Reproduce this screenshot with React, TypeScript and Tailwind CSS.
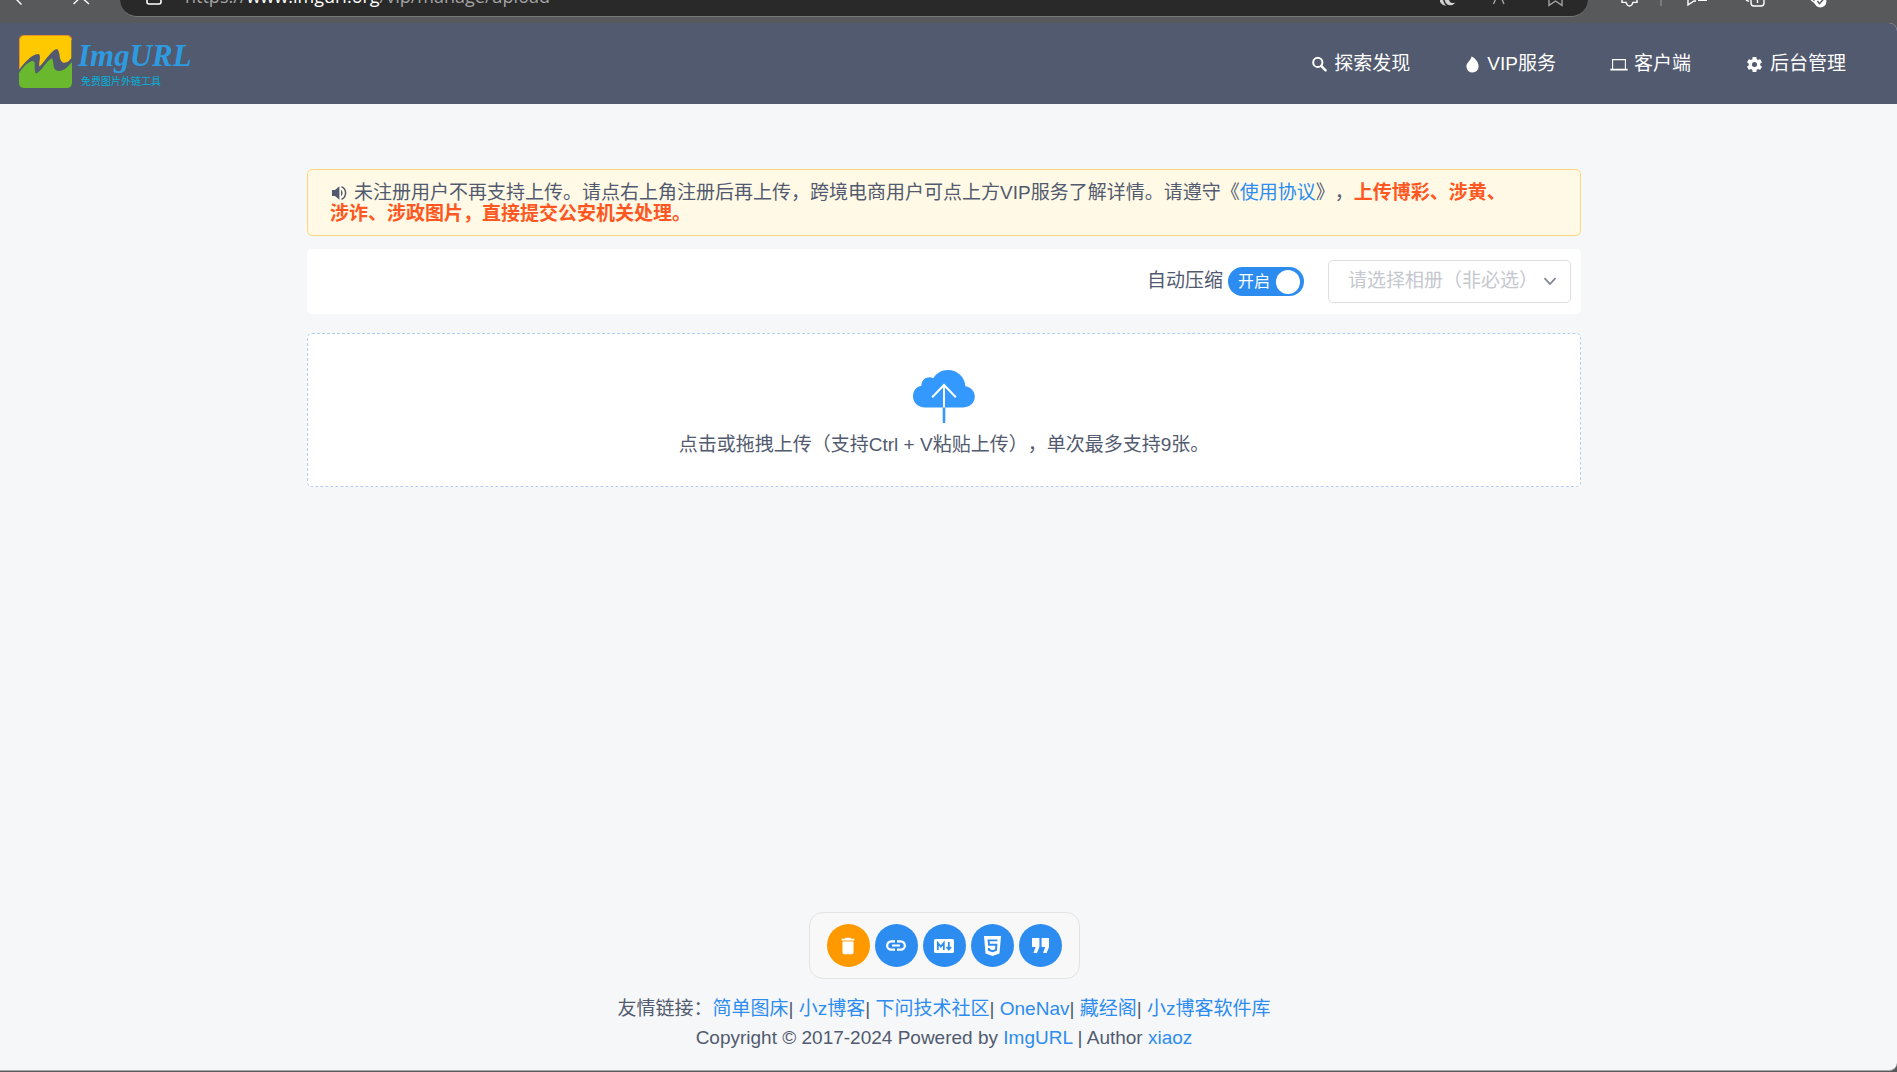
import { useState } from 'react';
import { MdDelete } from 'react-icons/md';

interface NavItem {
  label: string;
  href: string;
  icon: string;
}

const NAV_ITEMS: NavItem[] = [
  { label: '探索发现', href: '#found', icon: 'search' },
  { label: 'VIP服务', href: '#vip', icon: 'fire' },
  { label: '客户端', href: '#client', icon: 'laptop' },
  { label: '后台管理', href: '#manage', icon: 'gear' },
];

const FRIEND_LINKS = ['简单图床', '小z博客', '下问技术社区', 'OneNav', '藏经阁', '小z博客软件库'];

function NavIcon({ name }: { name: string }) {
  if (name === 'search') {
    return (
      <svg viewBox="0 0 17 17" className="size-[17px]" fill="none" stroke="currentColor" aria-hidden="true">
        <circle cx="6.8" cy="6.4" r="4.6" strokeWidth="2" />
        <path d="M10.2 9.8 L14.6 14.4" strokeWidth="2.4" strokeLinecap="round" />
      </svg>
    );
  }
  if (name === 'fire') {
    return (
      <svg viewBox="0 0 17 17" className="size-[17px]" fill="currentColor" aria-hidden="true">
        <path d="M7.4 0.6 C10.8 1.6 14.6 6 14.6 10.4 A6.1 6.1 0 0 1 2.4 10.6 C2.3 8 3.8 6.6 5.2 5 C6.6 3.4 7.3 2.3 7.4 0.6 Z" />
      </svg>
    );
  }
  if (name === 'laptop') {
    return (
      <svg viewBox="0 0 18 17" className="h-[17px] w-[18px]" fill="none" stroke="currentColor" aria-hidden="true">
        <path d="M2.6 13 V3.6 H15.4 V13" strokeWidth="1.1" />
        <path d="M0.3 13.6 H17.7" strokeWidth="1.8" />
      </svg>
    );
  }
  return (
    <svg viewBox="0 0 24 24" className="size-[19px]" fill="currentColor" aria-hidden="true">
      <path d="M19.14 12.94c.04-.3.06-.61.06-.94 0-.32-.02-.64-.07-.94l2.03-1.58a.49.49 0 0 0 .12-.61l-1.92-3.32a.488.488 0 0 0-.59-.22l-2.39.96c-.5-.38-1.03-.7-1.62-.94l-.36-2.54a.484.484 0 0 0-.48-.41h-3.84c-.24 0-.43.17-.47.41l-.36 2.54c-.59.24-1.13.57-1.62.94l-2.39-.96c-.22-.08-.47 0-.59.22L2.74 8.87c-.12.21-.08.47.12.61l2.03 1.58c-.05.3-.09.63-.09.94s.02.64.07.94l-2.03 1.58a.49.49 0 0 0-.12.61l1.92 3.32c.12.22.37.29.59.22l2.39-.96c.5.38 1.03.7 1.62.94l.36 2.54c.05.24.24.41.48.41h3.84c.24 0 .44-.17.47-.41l.36-2.54c.59-.24 1.13-.56 1.62-.94l2.39.96c.22.08.47 0 .59-.22l1.92-3.32c.12-.22.07-.47-.12-.61zM12 15.2a3.2 3.2 0 1 1 0-6.4 3.2 3.2 0 0 1 0 6.4z" />
    </svg>
  );
}

function BrowserBar() {
  return (
    <div className="flex h-[23px] shrink-0 items-start overflow-hidden text-white">
      <svg viewBox="0 0 120 10" className="h-[10px] w-[120px] shrink-0" fill="none" stroke="currentColor" strokeWidth="1.4" aria-hidden="true">
        <path d="M16 -1 L21.5 4.5 M73.5 4 L81 -3 L89 4" />
      </svg>
      <div className="flex h-[17px] flex-1 items-start justify-between rounded-b-[18px] border-b border-[#77787a] bg-[#292929] pr-2 pl-6">
        <div className="flex items-start">
          <svg viewBox="0 0 20 8" className="h-2 w-5" fill="none" stroke="currentColor" strokeWidth="1.6" aria-hidden="true">
            <path d="M3 -2 V2 Q3 4 5 4 H15 Q17 4 17 2 V-2" />
          </svg>
          <span className="-mt-[15px] ml-[21px] font-['Open_Sans','Noto_Sans',sans-serif] text-[18px] leading-[22px] text-[#a3a3a3]">
            https://<span className="text-white">www.imgurl.org</span>/vip/manage/upload
          </span>
        </div>
        <svg viewBox="0 0 140 10" className="h-[10px] w-[140px]" fill="none" stroke="#a3a3a3" strokeWidth="1.4" aria-hidden="true">
          <path d="M-1 -1 C0 3 2 5 6 6 C4 3 3 1 3 -1 Z" fill="#d0d0d0" stroke="none" />
          <path d="M4.5 -1 C5 5 11 8 15.5 2.4 C12 4 9 2.5 9 -1 Z" fill="#d0d0d0" stroke="none" />
          <path d="M53.5 4 L57 -4 M60.5 -4 L64 4" />
          <path d="M109 -2 V5.4 L115.5 1 L122 5.4 V-2" />
        </svg>
      </div>
      <svg viewBox="0 0 309 12" className="h-3 w-[309px] shrink-0" fill="none" stroke="currentColor" strokeWidth="1.4" aria-hidden="true">
        <path d="M34 -2 V2.4 H38 Q39 6 41.5 6 Q44 6 45 2.4 H49 V-2" />
        <path d="M73 -1 V6" stroke="#8a8b8d" />
        <path d="M100 -2 V5 L106 1 H108 M110 0.4 H119" />
        <path d="M163 -2 V3 Q163 6 166 6 H173 Q176 6 176 3 V-2 M169.5 -2 V3 M158 0 L161 1.4" />
        <path d="M221 -2 L228 3.6" />
        <circle cx="232.4" cy="1.5" r="6" fill="currentColor" stroke="none" />
        <path d="M229.4 1 L231.5 3.6 L236 -1.4" stroke="#58595b" />
      </svg>
    </div>
  );
}

function Logo() {
  return (
    <a href="#home" className="flex items-start gap-1.5 pb-0.5">
      <svg viewBox="0 0 53 53" className="size-[53px]" aria-hidden="true">
        <path d="M0.7 34 V5 Q0.7 0.7 5 0.7 H48 Q52.3 0.7 52.3 5 V23 Q50 27 45.5 27.8 Q42 28 40.8 22 Q40 14 37.4 14 C32 16 26 26 20.6 31.6 C19 29 23 20.4 19.5 19 C13.5 18.5 5.5 27.5 0.7 34 Z" fill="#ffc900" />
        <path d="M0.5 34 V5 Q0.5 0.5 5 0.5 H48 Q52.5 0.5 52.5 5" fill="none" stroke="#e8902a" />
        <path d="M0 38 C4.5 31 9.5 26.5 14.4 26 C17.5 28 14 36.5 17.4 38.4 C22.5 36 27.5 26 32.4 23.4 C36 24 32 35.4 39.5 35.9 C45.5 36 49.5 31 53 27 V47.5 Q53 53 47.5 53 H5.5 Q0 53 0 47.5 Z" fill="#69b82d" />
      </svg>
      <span className="flex flex-col pt-1.5">
        <span className="font-['Liberation_Serif',serif] text-[31px] leading-[30px] font-bold text-[#2e9be0] italic">ImgURL</span>
        <span className="pt-px pl-[3px] font-['Noto_Sans_CJK_SC',sans-serif] text-[10px] leading-[18px] text-[#06b1da]">免费图片外链工具</span>
      </span>
    </a>
  );
}

export default function App() {
  const [compress, setCompress] = useState(true);
  const [album, setAlbum] = useState('');

  const actionClass = 'flex size-[43px] items-center justify-center rounded-full text-white';

  return (
    <div className="flex min-h-screen flex-col bg-[#58595b] pb-px font-['Liberation_Sans','Noto_Sans_CJK_SC',sans-serif] text-[19px] text-[#515a6e] [text-spacing-trim:space-all]">
      <BrowserBar />

      <div className="flex flex-1 flex-col overflow-hidden rounded-r-lg border-b border-[#a9aab0] bg-[#f6f7f9]">
        <header className="flex h-[81px] shrink-0 items-center justify-between bg-[#515a6e] pr-[51px] pl-[19px]">
          <Logo />
          <nav className="flex items-center gap-[54px] pt-0.5">
            {NAV_ITEMS.map((item) => (
              <a key={item.href} href={item.href} className="flex items-center gap-1.5 text-white">
                <NavIcon name={item.icon} />
                {item.label}
              </a>
            ))}
          </nav>
        </header>

        <main className="mx-auto w-full max-w-[1283px] flex-1 pt-[65px] pr-[9px]">
          {/* Notice */}
          <div className="rounded-[5px] border border-[#ffd77a] bg-[#fff9e6] pt-3 pr-16 pb-[11px] pl-[22px] leading-[21px]">
            <svg viewBox="0 0 18 18" className="mr-1.5 inline size-[18px] align-[-3px]" fill="currentColor" aria-hidden="true">
              <path d="M2 6 H5 L9.4 2.2 V15.8 L5 12 H2 Z" />
              <path d="M11 5.6 Q14.2 9 11 12.4 Z" />
              <path d="M11.5 2.6 Q15.6 4.6 15.6 9 Q15.6 13.4 11.5 15.4" fill="none" stroke="currentColor" strokeWidth="1.5" />
            </svg>
            未注册用户不再支持上传。请点右上角注册后再上传，跨境电商用户可点上方VIP服务了解详情。请遵守《
            <a href="#agreement" className="text-[#2d8cf0]">使用协议</a>》，
            <b className="text-[#ff5722]">上传博彩、涉黄、涉诈、涉政图片，直接提交公安机关处理。</b>
          </div>

          {/* Upload options */}
          <div className="mt-[13px] flex h-[65px] items-center justify-end rounded-[5px] bg-white pr-2.5">
            <label htmlFor="compress" className="mr-[5px]">自动压缩</label>
            <span className="relative inline-flex h-[29px] w-[76px] items-center rounded-full bg-[#2d8cf0] pr-1 pl-2.5">
              <input
                id="compress"
                type="checkbox"
                role="switch"
                checked={compress}
                onChange={(e) => setCompress(e.target.checked)}
                className="absolute inset-0 cursor-pointer opacity-0"
              />
              <span className="text-[16px] text-white">{compress ? '开启' : '关闭'}</span>
              <span className="ml-auto size-6 rounded-full bg-white" />
            </span>
            <div className="relative ml-6">
              <select
                aria-label="相册"
                value={album}
                onChange={(e) => setAlbum(e.target.value)}
                className="h-[43px] w-[243px] appearance-none rounded-[5px] border border-[#dcdee2] bg-white pr-8 pl-[19px] text-[#c5c8ce]"
              >
                <option value="">请选择相册（非必选）</option>
              </select>
              <svg viewBox="0 0 14 9" className="pointer-events-none absolute top-[17px] right-[14px] h-[9px] w-[14px]" fill="none" stroke="#808695" strokeWidth="1.8" aria-hidden="true">
                <path d="M1.5 1.2 L7 7 L12.5 1.2" />
              </svg>
            </div>
          </div>

          {/* Drop zone */}
          <button
            type="button"
            className="mt-[19px] flex w-full flex-col items-center rounded-[5px] border border-dashed border-[#b5cdea] bg-white pt-9 pb-[27px]"
          >
            <svg viewBox="0 0 62 54" className="h-[54px] w-[62px]" aria-hidden="true">
              <path d="M12 37.4 C5 37.4 0 32.5 0 26.5 C0 21 3.5 16.6 8.4 15.8 C8.4 10.5 12 7.2 16.5 7.2 Q18.8 7.2 20.4 8.2 C23.3 3.2 28.5 0 35 0 C44.5 0 51.8 7 52.4 16.2 C58 17 61.8 21.2 61.8 26.6 C61.8 32.8 57 37.4 50.5 37.4 Z" fill="#3399ff" />
              <path d="M31 37 V53" stroke="#3399ff" strokeWidth="2.6" />
              <path d="M31 37.5 V15 M19.2 27.2 L31 15 L42.8 27.2" fill="none" stroke="#fff" strokeWidth="2" />
            </svg>
            <span className="mt-[7px] leading-[28px]">点击或拖拽上传（支持Ctrl + V粘贴上传），单次最多支持9张。</span>
          </button>
        </main>

        <footer className="flex flex-col items-center pr-[9px] pb-[18px]">
          {/* Batch actions */}
          <div className="mb-[15px] flex gap-[5px] rounded-[14px] border border-[#e3e3e3] bg-[#f8f8f8] px-[17px] py-[11px]">
            <button type="button" aria-label="删除" className={`${actionClass} bg-[#ff9900]`}>
              <MdDelete size={22} />
            </button>
            <button type="button" aria-label="URL" className={`${actionClass} bg-[#2d8cf0]`}>
              <svg viewBox="0 0 20 11" className="h-[11px] w-5" fill="none" stroke="currentColor" strokeWidth="2.2" aria-hidden="true">
                <path d="M9 1.4 H5.2 A4.1 4.1 0 0 0 5.2 9.6 H9 M11 1.4 H14.8 A4.1 4.1 0 0 1 14.8 9.6 H11 M6 5.5 H14" />
              </svg>
            </button>
            <button type="button" aria-label="Markdown" className={`${actionClass} bg-[#2d8cf0]`}>
              <svg viewBox="0 0 20 14" className="h-[14px] w-5" aria-hidden="true">
                <rect width="20" height="14" rx="1.5" fill="#fff" />
                <path d="M3.8 11 V4 L6.8 7.6 L9.8 4 V11 M14.8 3 V10 M12.6 8 L14.8 10.6 L17 8" fill="none" stroke="#2d8cf0" strokeWidth="1.8" />
              </svg>
            </button>
            <button type="button" aria-label="HTML" className={`${actionClass} bg-[#2d8cf0]`}>
              <svg viewBox="0 0 17 20" className="h-5 w-[17px]" aria-hidden="true">
                <path d="M0 0 H17 L15.5 17.6 L8.5 20 L1.5 17.6 Z" fill="#fff" />
                <path d="M13.4 4.4 H4.6 L5 8.8 H12.4 L12 14 L8.5 15.2 L5 14 L4.8 12" fill="none" stroke="#2d8cf0" strokeWidth="1.9" />
              </svg>
            </button>
            <button type="button" aria-label="BBCode" className={`${actionClass} bg-[#2d8cf0]`}>
              <svg viewBox="0 0 17 15" className="h-[15px] w-[17px]" fill="currentColor" aria-hidden="true">
                <path d="M0 0 H7.4 V9 L5 15 H1.4 L3.6 9 H0 Z M9.6 0 H17 V9 L14.6 15 H11 L13.2 9 H9.6 Z" />
              </svg>
            </button>
          </div>
          <p className="leading-[29px]">
            友情链接：
            {FRIEND_LINKS.map((name, i) => (
              <span key={name}>
                <a href={`#link-${i}`} className="text-[#2d8cf0]">{name}</a>
                {i < FRIEND_LINKS.length - 1 && '| '}
              </span>
            ))}
          </p>
          <p className="leading-[29px]">
            Copyright © 2017-2024 Powered by <a href="#imgurl" className="text-[#2d8cf0]">ImgURL</a> | Author{' '}
            <a href="#xiaoz" className="text-[#2d8cf0]">xiaoz</a>
          </p>
        </footer>
      </div>
    </div>
  );
}
